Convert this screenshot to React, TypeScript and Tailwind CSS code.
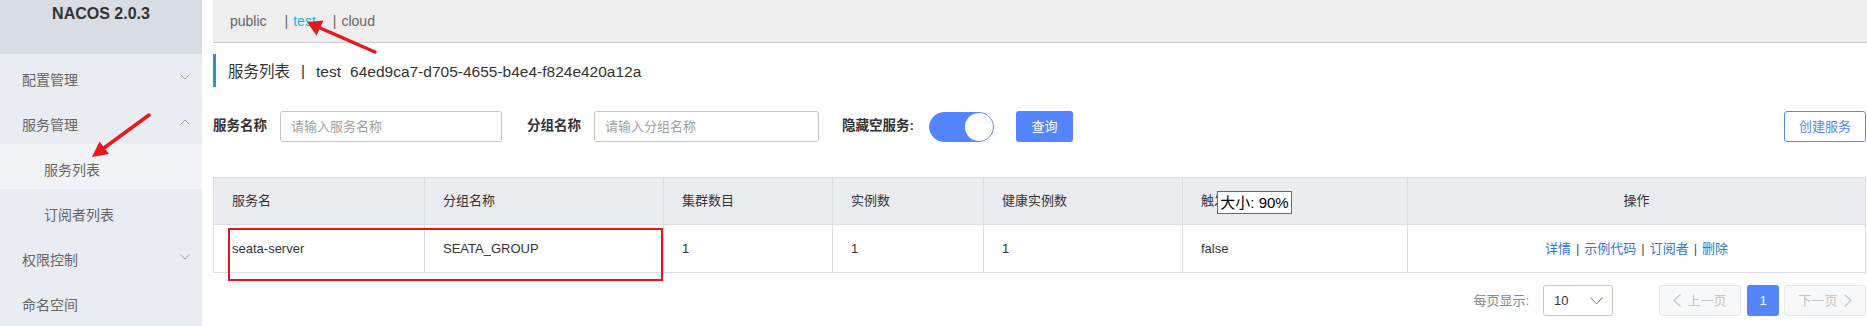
import React from "react";

const Chevron = ({ up = false }: { up?: boolean }) => (
  <svg width="10" height="6" viewBox="0 0 10 6" className="block">
    <polyline
      points={up ? "0.5,5.5 5,1 9.5,5.5" : "0.5,0.5 5,5 9.5,0.5"}
      fill="none"
      stroke="#9a9ea6"
      strokeWidth="1"
    />
  </svg>
);

const MenuItem = ({
  label,
  chevron,
  sub = false,
  active = false,
}: {
  label: string;
  chevron?: "up" | "down";
  sub?: boolean;
  active?: boolean;
}) => (
  <div
    className={`h-[45px] flex items-center justify-between pr-[12px] text-[14px] text-[#666] ${
      sub ? "pl-[44px]" : "pl-[22px]"
    } ${active ? "bg-[#f2f3f6]" : ""}`}
  >
    <span className="pt-[8px]">{label}</span>
    {chevron && <Chevron up={chevron === "up"} />}
  </div>
);

const cols = ["服务名", "分组名称", "集群数目", "实例数", "健康实例数", "触发保护阈值", "操作"];

export default function App() {
  return (
    <div className="relative w-[1867px] h-[326px] overflow-hidden bg-white flex font-['Liberation_Sans','Noto_Sans_CJK_SC',sans-serif]">
      {/* Sidebar */}
      <aside className="w-[202px] shrink-0 bg-[#e9ecf0] flex flex-col">
        <div className="h-[54px] bg-[#d8dde3] flex justify-center pt-[4px]">
          <span className="text-[16px] font-bold text-[#333] leading-[20px]">NACOS 2.0.3</span>
        </div>
        <MenuItem label="配置管理" chevron="down" />
        <MenuItem label="服务管理" chevron="up" />
        <MenuItem label="服务列表" sub active />
        <MenuItem label="订阅者列表" sub />
        <MenuItem label="权限控制" chevron="down" />
        <MenuItem label="命名空间" />
      </aside>

      {/* Main */}
      <main className="flex-1 pl-[11px] flex flex-col">
        <div className="h-[43px] bg-[#eeeeee] border-b border-[#cccccc] flex items-center pl-[17px] text-[14px] text-[#666]">
          <span>public</span>
          <span className="ml-[18px]">|</span>
          <span className="ml-[5px] text-[#1fb0e6]">test</span>
          <span className="ml-[17px]">|</span>
          <span className="ml-[5px]">cloud</span>
        </div>

        <div className="pr-[2px] flex flex-col">
          {/* Title */}
          <div className="mt-[11px] h-[33px] border-l-[3px] border-[#1b9ad6] pl-[12px] flex items-center text-[15.5px] text-[#333]">
            <span className="pt-[2px]">服务列表</span>
            <span className="ml-[11px] text-[#5a1010]">|</span>
            <span className="ml-[11px] pt-[2px]">test</span>
            <span className="ml-[9px] pt-[2px]">64ed9ca7-d705-4655-b4e4-f824e420a12a</span>
          </div>

          {/* Filter row */}
          <div className="mt-[24px] h-[31px] flex items-center text-[13.5px]">
            <span className="w-[67px] font-bold text-[#333]">服务名称</span>
            <div className="w-[222px] h-[31px] border border-[#c4c6cf] rounded-[3px] flex items-center pl-[10px] text-[13px] text-[#a0a0a0]">
              请输入服务名称
            </div>
            <span className="ml-[25px] w-[67px] font-bold text-[#333]">分组名称</span>
            <div className="w-[225px] h-[31px] border border-[#c4c6cf] rounded-[3px] flex items-center pl-[10px] text-[13px] text-[#a0a0a0]">
              请输入分组名称
            </div>
            <span className="ml-[23px] w-[87px] font-bold text-[#333]">隐藏空服务:</span>
            <div className="w-[65px] h-[30px] rounded-full bg-[#5584ff] border border-[#5584ff] flex justify-end items-center">
              <div className="w-[28px] h-[28px] rounded-full bg-white" />
            </div>
            <button className="ml-[22px] w-[57px] h-[31px] rounded-[3px] bg-[#5584ff] text-white text-[13px]">
              查询
            </button>
            <button className="ml-auto w-[82px] h-[31px] rounded-[3px] border border-[#5584ff] bg-white text-[#5584ff] text-[13px]">
              创建服务
            </button>
          </div>

          {/* Table */}
          <div className="mt-[35px] grid grid-cols-[211px_239px_169px_151px_199px_225px_458px] border-t border-l border-[#dcdee3] text-[13px] text-[#333]">
            {cols.map((c, i) => (
              <div
                key={c}
                className={`h-[47px] bg-[#ebecf0] border-r border-b border-[#dcdee3] flex items-center ${
                  i === 6 ? "justify-center" : "pl-[18px]"
                }`}
              >
                {c}
              </div>
            ))}
            <div className="h-[48px] border-r border-b border-[#dcdee3] flex items-center pl-[18px]">seata-server</div>
            <div className="h-[48px] border-r border-b border-[#dcdee3] flex items-center pl-[18px]">SEATA_GROUP</div>
            <div className="h-[48px] border-r border-b border-[#dcdee3] flex items-center pl-[18px]">1</div>
            <div className="h-[48px] border-r border-b border-[#dcdee3] flex items-center pl-[18px]">1</div>
            <div className="h-[48px] border-r border-b border-[#dcdee3] flex items-center pl-[18px]">1</div>
            <div className="h-[48px] border-r border-b border-[#dcdee3] flex items-center pl-[18px]">false</div>
            <div className="h-[48px] border-r border-b border-[#dcdee3] flex items-center justify-center">
              <span className="text-[#2f78d6]">详情</span>
              <span className="mx-[5px] text-[#555]">|</span>
              <span className="text-[#2f78d6]">示例代码</span>
              <span className="mx-[5px] text-[#555]">|</span>
              <span className="text-[#2f78d6]">订阅者</span>
              <span className="mx-[5px] text-[#555]">|</span>
              <span className="text-[#2f78d6]">删除</span>
            </div>
          </div>

          {/* Pagination */}
          <div className="mt-[12px] h-[31px] flex items-center justify-end text-[13px]">
            <span className="text-[#888]">每页显示:</span>
            <div className="ml-[14px] w-[70px] h-[31px] border border-[#c4c6cf] rounded-[3px] flex items-center justify-between pl-[10px] pr-[9px] text-[#333]">
              <span>10</span>
              <svg width="13" height="8" viewBox="0 0 13 8">
                <polyline points="0.5,0.5 6.5,7 12.5,0.5" fill="none" stroke="#777" strokeWidth="1" />
              </svg>
            </div>
            <div className="ml-[46px] w-[82px] h-[31px] border border-[#e6e7eb] bg-[#f7f8fa] rounded-[3px] flex items-center justify-center gap-[6px] text-[#c6c6c6]">
              <svg width="8" height="13" viewBox="0 0 8 13">
                <polyline points="7.5,0.5 1,6.5 7.5,12.5" fill="none" stroke="#c6c6c6" strokeWidth="1.2" />
              </svg>
              <span>上一页</span>
            </div>
            <div className="ml-[6px] w-[32px] h-[31px] rounded-[3px] bg-[#5584ff] text-white flex items-center justify-center">
              1
            </div>
            <div className="ml-[5px] w-[82px] h-[31px] border border-[#e6e7eb] bg-[#f7f8fa] rounded-[3px] flex items-center justify-center gap-[6px] text-[#c6c6c6]">
              <span>下一页</span>
              <svg width="8" height="13" viewBox="0 0 8 13">
                <polyline points="0.5,0.5 7,6.5 0.5,12.5" fill="none" stroke="#c6c6c6" strokeWidth="1.2" />
              </svg>
            </div>
          </div>
        </div>
      </main>

      {/* Overlays: tooltip, annotation box and arrows */}
      <div className="absolute left-[1217px] top-[191px] w-[75px] h-[23px] border border-[#6a6a6a] bg-white flex items-center justify-center text-[15px] text-black leading-none">
        大小: 90%
      </div>
      <div className="absolute left-[228px] top-[228px] w-[435px] h-[53px] border-2 border-[#e8141b]" />
      <svg className="absolute left-0 top-0 pointer-events-none" width="1867" height="326">
        <line x1="375" y1="52" x2="319" y2="27.5" stroke="#e5191f" strokeWidth="3.5" strokeLinecap="round" />
        <polygon points="307,22 323.5,20.5 316.5,35.5" fill="#e5191f" />
        <line x1="149" y1="115" x2="104" y2="148" stroke="#e5191f" strokeWidth="3.5" strokeLinecap="round" />
        <polygon points="92,157 99.5,141.5 109,154" fill="#e5191f" />
      </svg>
    </div>
  );
}
